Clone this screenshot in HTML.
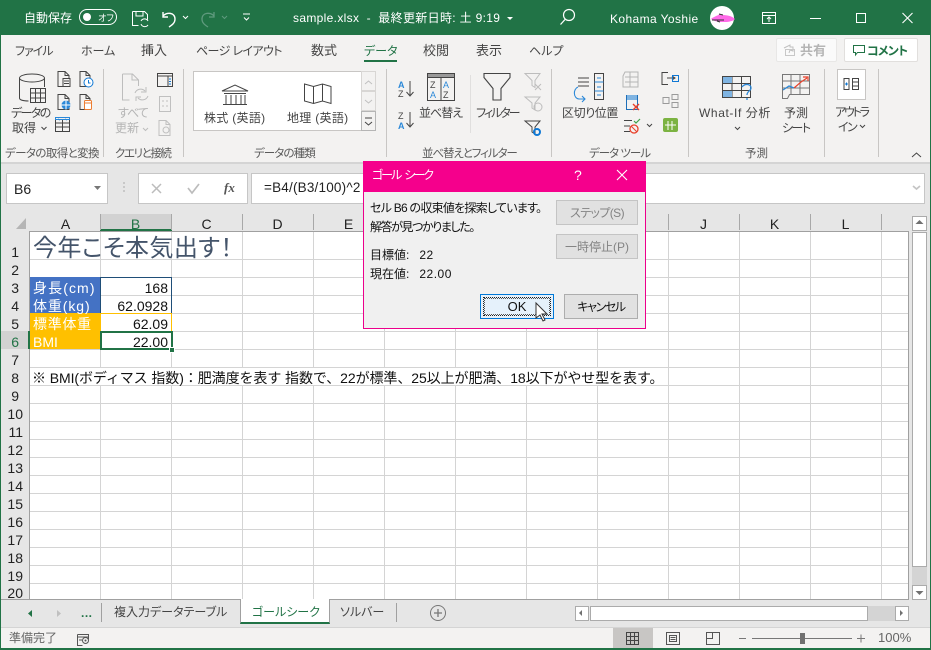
<!DOCTYPE html>
<html><head><meta charset="utf-8"><style>
html,body{margin:0;padding:0;width:931px;height:650px;overflow:hidden;background:#e6e6e6}
body{position:relative;font-family:"Liberation Sans","Noto Sans CJK JP",sans-serif;font-size:12px;color:#444;font-feature-settings:"palt"}
.t{position:absolute;white-space:nowrap;line-height:14px}
.b{position:absolute;box-sizing:border-box}
.w{color:#fff}
.rt{color:#444}
.g{color:#5a5a5a;font-size:11.5px}
.r{text-align:right}
.h{position:absolute;top:217px;width:71px;text-align:center;font-size:14px;line-height:14px;color:#222}
.n{position:absolute;left:0;width:27px;text-align:right;font-size:14px;line-height:14px;color:#222}
.cell{position:absolute;white-space:nowrap;font-size:14px;line-height:18px;color:#111}
.btn{position:absolute;box-sizing:border-box;background:#e1e1e1;border:1px solid #adadad;text-align:center;line-height:24px;color:#111;font-size:12px}
svg{position:absolute;left:0;top:0}
</style></head><body>
<!-- title bar -->
<div class="b" style="left:0;top:0;width:931px;height:35px;background:#217346"></div>
<div class="b" style="left:0;top:35px;width:931px;height:127px;background:#f3f2f1"></div>
<div class="b" style="left:0;top:162px;width:931px;height:2px;background:#d4d4d4"></div>
<div class="t w" style="left:24px;top:11px">自動保存</div>
<div class="t w" style="left:98px;top:11px;font-size:9px">オフ</div>
<div class="t w" style="left:293px;top:11px;letter-spacing:.33px">sample.xlsx&nbsp; -&nbsp; 最終更新日時: 土 9:19</div>
<div class="t w" style="left:610px;top:12px;letter-spacing:.4px">Kohama Yoshie</div>
<!-- tabs -->
<div class="t rt" style="left:15px;top:44px;letter-spacing:-1px">ファイル</div>
<div class="t rt" style="left:81px;top:44px">ホーム</div>
<div class="t rt" style="left:141px;top:44px;font-size:13px">挿入</div>
<div class="t rt" style="left:196px;top:44px;letter-spacing:-.6px">ページ レイアウト</div>
<div class="t rt" style="left:311px;top:44px;font-size:13px">数式</div>
<div class="t" style="left:364px;top:44px;color:#217346">データ</div>
<div class="b" style="left:364px;top:60px;width:33px;height:2px;background:#217346"></div>
<div class="t rt" style="left:423px;top:44px;font-size:13px">校閲</div>
<div class="t rt" style="left:476px;top:44px;font-size:13px">表示</div>
<div class="t rt" style="left:529px;top:44px">ヘルプ</div>
<div class="b" style="left:776px;top:38px;width:61px;height:24px;background:#fafafa;border:1px solid #e8e7e6;border-radius:2px"></div>
<div class="t" style="left:800px;top:44px;color:#b5b5b5;font-weight:bold;font-size:13px">共有</div>
<div class="b" style="left:844px;top:38px;width:74px;height:24px;background:#fff;border:1px solid #e1dfdd;border-radius:2px"></div>
<div class="t" style="left:867px;top:44px;color:#217346;font-weight:bold;letter-spacing:-.8px">コメント</div>
<!-- ribbon text -->
<div class="t rt" style="left:11px;top:106px;letter-spacing:-1.6px">データの</div>
<div class="t rt" style="left:12px;top:121px">取得</div>
<div class="t" style="left:118px;top:106px;color:#b5b5b5;letter-spacing:-1px">すべて</div>
<div class="t" style="left:115px;top:121px;color:#b5b5b5">更新</div>
<div class="b" style="left:193px;top:71px;width:183px;height:60px;background:#fff;border:1px solid #c8c6c4"></div>
<div class="b" style="left:361px;top:71px;width:15px;height:20px;background:#f3f2f1;border:1px solid #d8d6d4"></div>
<div class="b" style="left:361px;top:91px;width:15px;height:20px;background:#f3f2f1;border:1px solid #d8d6d4"></div>
<div class="b" style="left:361px;top:111px;width:15px;height:20px;background:#f3f2f1;border:1px solid #b5b5b5"></div>
<div class="t rt" style="left:204px;top:111px;letter-spacing:.3px">株式 (英語)</div>
<div class="t rt" style="left:287px;top:111px;letter-spacing:.3px">地理 (英語)</div>
<div class="t rt" style="left:419px;top:106px;letter-spacing:-1px">並べ替え</div>
<div class="t rt" style="left:476px;top:106px;letter-spacing:-2px">フィルター</div>
<div class="t rt" style="left:562px;top:106px;letter-spacing:-.4px">区切り位置</div>
<div class="t rt" style="left:699px;top:106px;letter-spacing:.6px">What-If 分析</div>
<div class="t rt" style="left:784px;top:106px">予測</div>
<div class="t rt" style="left:782px;top:121px;letter-spacing:-1.6px">シート</div>
<div class="t rt" style="left:835px;top:105px;letter-spacing:-2.2px">アウトラ</div>
<div class="t rt" style="left:838px;top:120px;letter-spacing:-1.5px">イン</div>
<div class="t g" style="left:5px;top:147px;letter-spacing:-.6px">データの取得と変換</div>
<div class="t g" style="left:115px;top:147px;letter-spacing:-1.4px">クエリと接続</div>
<div class="t g" style="left:254px;top:147px;letter-spacing:-.9px">データの種類</div>
<div class="t g" style="left:422px;top:147px;letter-spacing:-1.1px">並べ替えとフィルター</div>
<div class="t g" style="left:589px;top:147px;letter-spacing:-1px">データ ツール</div>
<div class="t g" style="left:745px;top:147px">予測</div>
<div class="b" style="left:837px;top:69px;width:29px;height:31px;background:#fff;border:1px solid #c8c6c4"></div>
<!-- formula bar -->
<div class="b" style="left:6px;top:173px;width:102px;height:31px;background:#fff;border:1px solid #c6c6c6"></div>
<div class="t" style="left:14px;top:182px;font-size:14px;color:#222">B6</div>
<div class="b" style="left:138px;top:173px;width:110px;height:31px;background:#fff;border:1px solid #c6c6c6"></div>
<div class="b" style="left:251px;top:173px;width:674px;height:31px;background:#fff;border:1px solid #c6c6c6"></div>
<div class="t" style="left:264px;top:181px;font-size:13.5px;color:#222;letter-spacing:.2px">=B4/(B3/100)^2</div>
<div class="t" style="left:224px;top:181px;font-family:'Liberation Serif',serif;font-style:italic;font-weight:bold;font-size:13px;color:#555">fx</div>
<!-- grid -->
<div class="b" style="left:29px;top:231px;width:880px;height:369px;background-color:#fff;background-image:repeating-linear-gradient(90deg,transparent 0,transparent 70px,#d4d4d4 70px,#d4d4d4 71px);border:1px solid #a0a0a0"></div>
<div class="b" style="left:30px;top:259px;width:878px;height:340px;background-image:repeating-linear-gradient(180deg,#d4d4d4 0,#d4d4d4 1px,transparent 1px,transparent 18px)"></div>
<!-- headers -->
<div class="b" style="left:100px;top:214px;width:72px;height:17px;background:#d2d2d2;border-bottom:2px solid #217346"></div>
<div class="b" style="left:0;top:331px;width:30px;height:18px;background:#d2d2d2;border-right:2px solid #217346"></div>
<div class="h" style="left:30px">A</div><div class="h" style="left:100px;color:#217346">B</div><div class="h" style="left:171px">C</div><div class="h" style="left:242px">D</div><div class="h" style="left:313px">E</div><div class="h" style="left:384px">F</div><div class="h" style="left:455px">G</div><div class="h" style="left:526px">H</div><div class="h" style="left:597px">I</div><div class="h" style="left:668px">J</div><div class="h" style="left:739px">K</div><div class="h" style="left:810px">L</div>
<div class="n" style="left:-8px;top:245px">1</div>
<div class="n" style="left:-8px;top:263px">2</div><div class="n" style="left:-8px;top:281px">3</div><div class="n" style="left:-8px;top:299px">4</div><div class="n" style="left:-8px;top:317px">5</div><div class="n" style="left:-8px;top:335px;color:#217346">6</div><div class="n" style="left:-8px;top:353px">7</div><div class="n" style="left:-8px;top:371px">8</div><div class="n" style="left:-8px;top:389px">9</div>
<div class="n" style="top:407px;left:-4px">10</div><div class="n" style="top:425px;left:-4px">11</div><div class="n" style="top:443px;left:-4px">12</div><div class="n" style="top:461px;left:-4px">13</div><div class="n" style="top:479px;left:-4px">14</div><div class="n" style="top:497px;left:-4px">15</div><div class="n" style="top:515px;left:-4px">16</div><div class="n" style="top:533px;left:-4px">17</div><div class="n" style="top:551px;left:-4px">18</div><div class="n" style="top:569px;left:-4px">19</div><div class="n" style="top:586px;left:-4px">20</div>
<!-- cells -->
<div class="b" style="left:30px;top:277px;width:71px;height:36px;background:#4472c4"></div>
<div class="b" style="left:30px;top:313px;width:71px;height:36px;background:#ffc000"></div>
<div class="b" style="left:100px;top:277px;width:72px;height:37px;border:1px solid #1f4e78;border-bottom:none;background:#fff"></div>
<div class="b" style="left:101px;top:295px;width:70px;height:1px;background:#d4d4d4"></div>
<div class="b" style="left:100px;top:313px;width:72px;height:1px;background:#ffc000"></div>
<div class="b" style="left:171px;top:313px;width:1px;height:18px;background:#ffc000"></div>
<div class="b" style="left:100px;top:331px;width:73px;height:19px;border:2px solid #217346"></div>
<div class="b" style="left:169px;top:347px;width:6px;height:6px;background:#217346;border:1px solid #fff"></div>
<div class="cell" style="left:33px;top:235px;font-size:24px;line-height:28px;color:#44546a;letter-spacing:.4px">今年こそ本気出す！</div>
<div class="cell" style="left:33px;top:279px;color:#fff;letter-spacing:1.1px">身長(cm)</div>
<div class="cell" style="left:33px;top:297px;color:#fff;letter-spacing:.9px">体重(kg)</div>
<div class="cell" style="left:33px;top:315px;color:#fff;letter-spacing:.7px">標準体重</div>
<div class="cell" style="left:33px;top:333px;color:#fff">BMI</div>
<div class="cell r" style="left:101px;width:67px;top:279px">168</div>
<div class="cell r" style="left:101px;width:67px;top:297px">62.0928</div>
<div class="cell r" style="left:101px;width:67px;top:315px">62.09</div>
<div class="cell r" style="left:101px;width:67px;top:333px">22.00</div>
<div class="b" style="left:30px;top:368px;width:638px;height:17px;background:#fff"></div>
<div class="cell" style="left:32px;top:369px;font-size:14px;letter-spacing:-.08px;font-feature-settings:normal">※ BMI(ボディマス 指数)：肥満度を表す 指数で、22が標準、25以上が肥満、18以下がやせ型を表す。</div>
<!-- vertical scrollbar -->
<div class="b" style="left:912px;top:216px;width:15px;height:15px;background:#fff;border:1px solid #ababab"></div>
<div class="b" style="left:912px;top:232px;width:15px;height:335px;background:#fff;border:1px solid #ababab"></div>
<div class="b" style="left:912px;top:567px;width:15px;height:18px;background:#d4d4d4"></div>
<div class="b" style="left:912px;top:585px;width:15px;height:15px;background:#fff;border:1px solid #ababab"></div>
<!-- sheet tabs -->
<div class="b" style="left:0;top:600px;width:931px;height:27px;background:#e6e6e6"></div>
<div class="b" style="left:0;top:599px;width:909px;height:1px;background:#a0a0a0"></div>
<div class="b" style="left:240px;top:599px;width:90px;height:25px;background:#fff;border-left:1px solid #a0a0a0;border-right:1px solid #a0a0a0;border-bottom:2px solid #217346"></div>
<div class="b" style="left:101px;top:603px;width:1px;height:19px;background:#a0a0a0"></div>
<div class="b" style="left:396px;top:603px;width:1px;height:19px;background:#a0a0a0"></div>
<div class="t" style="left:81px;top:606px;color:#217346;font-weight:bold;letter-spacing:.5px">...</div>
<div class="t rt" style="left:114px;top:605px">複入力データテーブル</div>
<div class="t" style="left:252px;top:605px;color:#217346">ゴールシーク</div>
<div class="t rt" style="left:340px;top:605px">ソルバー</div>
<!-- horizontal scrollbar -->
<div class="b" style="left:575px;top:606px;width:14px;height:15px;background:#fff;border:1px solid #ababab"></div>
<div class="b" style="left:590px;top:606px;width:278px;height:15px;background:#fff;border:1px solid #ababab"></div>
<div class="b" style="left:868px;top:606px;width:27px;height:15px;background:#d4d4d4"></div>
<div class="b" style="left:895px;top:606px;width:14px;height:15px;background:#fff;border:1px solid #ababab"></div>
<!-- status bar -->
<div class="b" style="left:0;top:627px;width:931px;height:21px;background:#f3f2f1;border-top:1px solid #d4d4d4"></div>
<div class="b" style="left:0;top:648px;width:931px;height:2px;background:#217346"></div>
<div class="b" style="left:613px;top:628px;width:40px;height:20px;background:#c8c6c4"></div>
<div class="t" style="left:9px;top:631px;color:#666">準備完了</div>
<div class="t" style="left:878px;top:631px;color:#666;font-size:13px">100%</div>
<!-- side borders -->
<div class="b" style="left:0;top:35px;width:1px;height:615px;background:#217346"></div>
<div class="b" style="left:930px;top:35px;width:1px;height:615px;background:#217346"></div>

<svg width="931" height="650" viewBox="0 0 931 650" fill="none" stroke-width="1">
<!-- titlebar icons -->
<rect x="79.5" y="9.5" width="37" height="15" rx="7.5" stroke="#fff"/><circle cx="87" cy="17" r="4" fill="#fff"/>
<path d="M132.500 11.500h12l3 3v5M132.500 11.500v14h6M136 12v4h7v-4M141 21a4 4 0 0 1 7 0M148 25a4 4 0 0 1-7-1" stroke="#fff"/>
<path d="M163 12v5h5M163 16c3-4 12-4 12 3 0 4-3 6-6 8" stroke="#fff" stroke-width="1.4"/>
<path d="M183 16l2.500 2.500 2.500-2.500" stroke="#fff"/>
<path d="M214 12v5h-5M214 16c-3-4-12-4-12 3 0 4 3 6 6 8" stroke="#5f9a7e" stroke-width="1.300"/>
<path d="M222 16l2.500 2.500 2.500-2.500" stroke="#5f9a7e"/>
<path d="M243 14h7M244 17.500l2.500 2.500 2.500-2.500" stroke="#fff"/>
<path d="M507 17h6l-3 3z" fill="#fff"/>
<circle cx="569" cy="15" r="5.500" stroke="#fff" stroke-width="1.200"/><path d="M565 19.500l-4.500 5" stroke="#fff" stroke-width="1.300"/>
<circle cx="722" cy="18" r="12" fill="#fff"/><path d="M711 19c2-2 6-3 9-5l2 1c5 0 10 1 13 4-2 2-6 3-10 3-5 0-10 0-14-3z" fill="#ff6ae8"/><path d="M712 20h12M717 21l3 1M719 14l4 1" stroke="#333"/>
<rect x="762.500" y="12.500" width="13" height="11" stroke="#fff"/><path d="M762 15.500h14M769 22v-5M767 19l2-2 2 2" stroke="#fff"/>
<path d="M810 18.500h11" stroke="#fff"/><rect x="856.500" y="13.500" width="9" height="9" stroke="#fff"/>
<path d="M902.500 13l10 10M912.500 13l-10 10" stroke="#fff" stroke-width="1.100"/>
<path d="M784 48l6-3v2h3v4l-3-1-1 3" stroke="#c0c0c0"/><rect x="785.500" y="49.500" width="9" height="6" stroke="#c8c8c8"/>
<path d="M853.500 45.500h11v7h-7l-2 2.500v-2.500h-2z" stroke="#217346"/>
<!-- group separators -->
<path d="M103.500 69v88M183.500 69v88M386.500 69v88M551.500 69v88M688.500 69v88M824.500 69v88M878.500 69v88" stroke="#c8c6c4"/>
<path d="M470.500 75v58" stroke="#e0dfde"/>
<!-- data get -->
<ellipse cx="32" cy="78" rx="12.500" ry="4" stroke="#444"/><path d="M19.500 78v20c0 2 4 3 9 3M44.500 78v9" stroke="#444"/>
<path d="M30.500 88.500h15v14h-15zM30.500 93h15M30.500 98h15M35.500 88.500v14M40.500 88.500v14" stroke="#444"/>
<path d="M41.500 127l2.500 2.500 2.500-2.500" stroke="#444"/>
<path d="M58 71.500h7l4 4v11h-11zM65 71.500v4h4" stroke="#444"/><path d="M63 78.500h7v8h-7zM64 81h5M64 83.500h5" stroke="#444" fill="#f3f2f1"/>
<path d="M80 71.500h6l4 4v11h-10zM86 71.500v4h4" stroke="#444"/><circle cx="88.500" cy="82.500" r="4.500" stroke="#0f78d4" fill="#fff"/><path d="M88.500 80v3h2" stroke="#0f78d4"/>
<path d="M58 94.500h7l4 4v11h-11zM65 94.500v4h4" stroke="#444"/><circle cx="66" cy="105" r="4.500" fill="#2b88d8"/><path d="M61.500 105h9M66 100.500v9" stroke="#fff"/>
<path d="M80 94.500h6l4 4v11h-10zM86 94.500v4h4" stroke="#444"/><rect x="84.500" y="100.500" width="7" height="9" rx="1" stroke="#ed7d31" fill="#fff"/><path d="M84.500 103h7" stroke="#ed7d31"/>
<path d="M55.500 119.500h14v12h-14zM55.500 123h14M55.500 127h14M62.500 119.500v12" stroke="#444"/><path d="M55.500 117.500h14v2h-14zM58 119l2 1M65 119l2 1" stroke="#2b88d8"/>
<!-- refresh -->
<path d="M122.500 74h10l6 6v6M122.500 74v26h7M132 74v6h6" stroke="#bdbdbd"/><path d="M135 93a6 6 0 0 1 10-2M146 87v5h-5M148 96a6 6 0 0 1-10 2M136 101v-4h5" stroke="#bdbdbd"/>
<path d="M143 128l2.500 2.500 2.500-2.500" stroke="#bdbdbd"/>
<path d="M157.500 73.500h15v13h-15zM157.500 76h15M168 76v10" stroke="#444"/><path d="M169 79h2M169 81.500h2M169 84h2" stroke="#0f78d4"/>
<rect x="159.500" y="96.500" width="11" height="15" stroke="#c0c0c0"/><path d="M162 101h2M162 106h2M166 101h2M166 106h2" stroke="#c0c0c0"/>
<path d="M159 120.500h7l4 4v11h-11zM166 120.500v4h4" stroke="#c0c0c0"/><circle cx="166" cy="130" r="3" stroke="#c0c0c0"/>
<!-- gallery icons -->
<path d="M222 91l13-6 13 6zM224 93.500h22M223 104.500h24M226 95v9M231 95v9M236 95v9M241 95v9M245 95v9" stroke="#444"/>
<path d="M304.500 84l9 2.500 9-2.500 8.500 2.500v17l-8.500-2.500-9 2.500-9-2.500zM313.500 86.500v17M322.500 84v17" stroke="#444"/>
<path d="M365 84l3.500-3 3.500 3" stroke="#c0c0c0"/><path d="M365 100l3.500 3 3.500-3" stroke="#c0c0c0"/><path d="M365 118h7M365 122l3.500 3 3.500-3" stroke="#444"/>
<!-- sort -->
<text x="398" y="88" font-family="Liberation Sans" font-size="9" font-weight="bold" fill="#2b88d8">A</text><text x="398" y="97" font-family="Liberation Sans" font-size="9" fill="#444">Z</text>
<path d="M410 81v14M406.500 92l3.500 4 3.500-4" stroke="#444"/>
<text x="398" y="119" font-family="Liberation Sans" font-size="9" fill="#444">Z</text><text x="398" y="129" font-family="Liberation Sans" font-size="9" font-weight="bold" fill="#2b88d8">A</text>
<path d="M410 112v14M406.500 123l3.500 4 3.500-4" stroke="#444"/>
<rect x="427.500" y="73.500" width="27" height="27" stroke="#444"/><rect x="427.500" y="73.500" width="27" height="4" fill="#999" stroke="#444"/><path d="M441 78v22" stroke="#444"/>
<text x="430" y="88" font-family="Liberation Sans" font-size="9" fill="#444">Z</text><text x="443" y="88" font-family="Liberation Sans" font-size="9" fill="#2b88d8">A</text><text x="430" y="98" font-family="Liberation Sans" font-size="9" fill="#2b88d8">A</text><text x="443" y="98" font-family="Liberation Sans" font-size="9" fill="#444">Z</text>
<!-- filter -->
<path d="M484 73.500h26v4l-9 11v11.500h-8v-11.500l-9-11z" stroke="#444" stroke-width="1.100"/>
<path d="M525 73.500h15l-5 7v7l-3-2v-5zM535 84l6 6M541 84l-6 6" stroke="#bdbdbd"/>
<path d="M525 97h15l-5 6v7l-3-2v-5z" stroke="#bdbdbd"/><circle cx="538" cy="107" r="4" stroke="#bdbdbd"/>
<path d="M525 121h15l-5 6v7l-3-2v-5z" stroke="#444"/><circle cx="537" cy="132" r="3" stroke="#0f78d4" stroke-width="2"/>
<!-- data tools -->
<path d="M578 78h11M578 82h11M578 86h11" stroke="#444"/><rect x="594.500" y="73.500" width="9" height="26" stroke="#444"/><path d="M594.500 82h9M594.500 91h9M597 78h4M597 87h4M597 95h4" stroke="#2b88d8"/>
<path d="M578 87c-5 2-5 11 1 12h6M582 96l3 3-3 3" stroke="#2b88d8" stroke-width="1.100"/>
<path d="M625 72h13v15h-15v-11zM625 77h13M625 82h13M630 72v15" stroke="#b5b5b5"/>
<rect x="626.500" y="95.500" width="11" height="14" stroke="#1e6fb8"/><rect x="627" y="95" width="10" height="5" fill="#7fb4e2"/><path d="M633 104l6 6M639 104l-6 6" stroke="#e8402a" stroke-width="1.400"/>
<path d="M624 120.500h8M624 126h6M624 131.500h6" stroke="#444"/><path d="M634 121l2 2 4-4" stroke="#3fa14a" stroke-width="1.200"/><circle cx="634" cy="129" r="4" stroke="#e8402a" stroke-width="1.300"/><path d="M631.500 126.500l5 5" stroke="#e8402a"/>
<path d="M647 124l2.500 2.500 2.500-2.500" stroke="#444"/>
<path d="M668 72.500h-6v12h6M667 78h8M672 76l3 2-3 2" stroke="#444"/><rect x="672.500" y="75.500" width="6" height="6" stroke="#0f78d4"/>
<path d="M663 97.500h6v6h-6zM672 94.500h6v5h-6zM672 102.500h6v5h-6z" stroke="#9a9a9a"/>
<rect x="663" y="118" width="15" height="14" rx="2" fill="#7cb342"/><path d="M668 121v9M672 121v9M665 125h11" stroke="#fff"/>
<!-- forecast -->
<rect x="722.500" y="76.500" width="28" height="21" stroke="#444"/><path d="M732 76.500v21M741.500 76.500v21M722.500 83.500h28M722.500 90.500h28" stroke="#444"/>
<rect x="723" y="77" width="9" height="6" fill="#7fb4e2"/><rect x="723" y="91" width="9" height="6" fill="#7fb4e2"/>
<path d="M742 87c3-4 9-3 9 1 0 3-4 3-4 7M747 98v2" stroke="#2b88d8" stroke-width="1.300"/>
<path d="M782.500 74.500h27v20h-20l-2 4h-5zM791 74.500v20M800 74.500v20M782.500 81h27M782.500 88h27" stroke="#777"/>
<path d="M783 90l6-4 5 2" stroke="#2b88d8" stroke-width="1.300"/><path d="M794 88l7-6 6-4M803 77h5v4" stroke="#e8402a" stroke-width="1.200"/>
<path d="M735 127l2.500 2.500 2.500-2.500" stroke="#444"/>
<!-- outline -->
<path d="M844 78.500h5v11h-5zM852.500 78.500h6v11h-6zM852.500 82h6M852.500 86h6" stroke="#444"/><path d="M845 84h3M846.500 82.500v3" stroke="#0f78d4"/>
<path d="M860 125l2.500 2.500 2.500-2.500" stroke="#444"/>
<path d="M912 157l4.500-4 4.500 4" stroke="#444"/>
<!-- formula bar icons -->
<path d="M94 186h7l-3.500 4z" fill="#777"/>
<path d="M123 183h2M123 187h2M123 191h2" stroke="#aaa"/>
<path d="M152 184l9 9M161 184l-9 9" stroke="#bcbcbc" stroke-width="1.500"/>
<path d="M188 188l4 5 7-9" stroke="#bcbcbc" stroke-width="1.700"/>
<path d="M913 186l3.500 3 3.500-3" stroke="#c4c4c4" stroke-width="1.700"/>
<path d="M26 218v11H16z" fill="#b5b5b5"/>
<path d="M100.500 214v16M171.500 214v16M242.500 214v16M313.500 214v16M384.500 214v16M455.500 214v16M526.500 214v16M597.500 214v16M668.500 214v16M739.500 214v16M810.500 214v16M881.500 214v16" stroke="#a8a8a8"/>
<!-- scroll arrows -->
<path d="M915.500 224l4-4 4 4z" fill="#707070"/><path d="M915.500 591h8l-4 4z" fill="#707070"/>
<path d="M582 610v6l-3-3z" fill="#707070"/><path d="M900 610v6l3-3z" fill="#707070"/>
<path d="M32 610v7l-4-3.500z" fill="#217346"/><path d="M57 610v7l4-3.500z" fill="#c0c0c0"/>
<circle cx="438" cy="613" r="7.500" stroke="#777"/><path d="M434 613h8M438 609v8" stroke="#777" stroke-width="1.300"/>
<!-- status icons -->
<path d="M77.500 634.500h11v5M77.500 634.500v11h5M77.500 637h11M79 640h3" stroke="#555"/><circle cx="85.500" cy="640.500" r="3" stroke="#555"/><circle cx="85.500" cy="640.500" r="1" fill="#555"/>
<path d="M626.500 632.500h12v12h-12zM630.500 632.500v12M634.500 632.500v12M626.500 636.500h12M626.500 640.500h12" stroke="#444"/>
<path d="M666.500 632.500h13v12h-13zM669.500 635.500h7v6h-7zM670.500 637.500h5M670.500 639.500h5" stroke="#555"/>
<path d="M706.500 632.500h13v12h-13zM712.500 632.500v6h-6" stroke="#555" fill="none"/>
<path d="M739 638.500h7M752 638.500h100M857 638.500h8M861 634.500v8" stroke="#777"/>
<rect x="800" y="633" width="5" height="11" fill="#707070"/>
<!-- dialog -->
<rect x="363.500" y="161.500" width="282" height="167" fill="#f0f0f0" stroke="#ec008c"/>
<rect x="363" y="161" width="283" height="31" fill="#f5008c"/>
<path d="M617 170l10 10M627 170l-10 10" stroke="#fff" stroke-width="1.100"/>
</svg>
<!-- dialog contents -->
<div class="t w" style="left:372px;top:168px;letter-spacing:-2px">ゴール<span style="margin-left:4px">シーク</span></div>
<div class="t w" style="left:574px;top:168px;font-size:14px">?</div>
<div class="t" style="left:370px;top:201px;color:#111;letter-spacing:-.75px">セル B6 の収束値を探索しています。</div>
<div class="t" style="left:370px;top:220px;color:#111;letter-spacing:-1.4px">解答が見つかりました。</div>
<div class="t" style="left:370px;top:248px;color:#111">目標値:&nbsp;&nbsp; <span style="letter-spacing:.5px">22</span></div>
<div class="t" style="left:370px;top:267px;color:#111">現在値:&nbsp;&nbsp; <span style="letter-spacing:.5px">22.00</span></div>
<div class="btn" style="left:556px;top:200px;width:82px;height:25px;border-color:#c4c4c4;color:#838383;letter-spacing:-.6px">ステップ(S)</div>
<div class="btn" style="left:556px;top:234px;width:82px;height:25px;border-color:#c4c4c4;color:#838383">一時停止(P)</div>
<div class="btn" style="left:480px;top:294px;width:74px;height:25px;background:#e5f1fb;border:1px solid #0078d7;font-size:13px">OK</div>
<div class="b" style="left:483px;top:297px;width:68px;height:19px;border:1px dotted #222"></div>
<div class="b" style="left:484px;top:298px;width:66px;height:17px;border:1px dotted #555"></div>
<div class="btn" style="left:564px;top:294px;width:74px;height:25px;letter-spacing:-1.4px">キャンセル</div>
<svg width="931" height="650" viewBox="0 0 931 650" style="pointer-events:none"><path d="M536 303l0 15 4-3 3 6 2-1-3-6h5z" fill="#fff" stroke="#333"/></svg>
</body></html>
